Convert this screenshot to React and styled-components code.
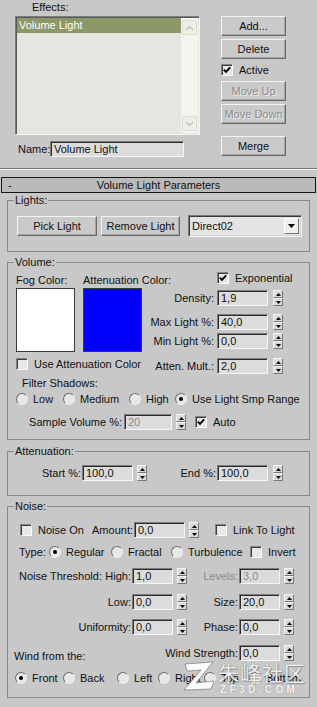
import React from 'react';
import styled, { createGlobalStyle, css } from 'styled-components';

const BG = '#c8c8c8';

const GlobalStyle = createGlobalStyle`
  html, body { margin: 0; padding: 0; background: ${BG}; }
  body { font-family: "Liberation Sans", Arial, sans-serif; font-size: 11px; color: #111; }
  * { box-sizing: border-box; }
`;

const sunken = css`
  border: 1px solid;
  border-color: #7c7c7c #f6f6f6 #f6f6f6 #7c7c7c;
  box-shadow: inset 1px 1px 0 #2c2c2c;
`;

const raised = css`
  border: 1px solid;
  border-color: #f4f4f4 #6a6a6a #6a6a6a #f4f4f4;
  box-shadow: inset -1px -1px 0 #a4a4a4;
`;

const Page = styled.div`
  position: relative;
  width: 317px;
  height: 707px;
  overflow: hidden;
  background: ${BG};
  font-family: "Liberation Sans", Arial, sans-serif;
  font-size: 11px;
  line-height: 14px;
  color: #111;
  white-space: nowrap;
`;

/* ---------- top area ---------- */
const Top = styled.div`
  display: flex;
  padding-left: 15px;
`;
const LeftCol = styled.div`
  width: 185px;
  display: flex;
  flex-direction: column;
`;
const EffectsLabel = styled.div`
  height: 16px;
  line-height: 14px;
  padding-left: 17px;
`;
const ListBox = styled.div`
  height: 119px;
  display: flex;
  padding: 1px;
  border: 1px solid;
  border-color: #7c7c7c #f6f6f6 #f6f6f6 #7c7c7c;
  box-shadow: inset 1px 1px 0 #5a5a5a;
  background: #e5e5e1;
`;
const ListItems = styled.div`
  flex: 1;
`;
const ListItem = styled.div`
  height: 15px;
  line-height: 15px;
  padding-left: 2px;
  background: ${p => (p.$selected ? '#8c9868' : 'transparent')};
  color: ${p => (p.$selected ? '#fff' : '#111')};
`;
const ScrollBar = styled.div`
  width: 17px;
  background: #f4f3ed;
  display: flex;
  flex-direction: column;
  justify-content: space-between;
  padding: 2px 1px;
`;
const ScrollArrow = styled.div`
  height: 15px;
  border: 1px solid #dddcd4;
  border-radius: 2px;
  background: #efeee7;
  display: flex;
  align-items: center;
  justify-content: center;
`;
const NameRow = styled.div`
  margin-top: 6px;
  height: 16px;
  display: flex;
  align-items: center;
`;
const NameLabel = styled.span`
  width: 35px;
  padding-left: 3px;
`;
const TextField = styled.div`
  ${sunken};
  width: ${p => p.$w}px;
  height: 16px;
  line-height: 14px;
  padding-left: 3px;
  background: #dcdcdc;
  color: ${p => (p.$disabled ? '#8a8a8a' : '#111')};
  flex: none;
  overflow: hidden;
`;
const RightCol = styled.div`
  margin-left: 21px;
  width: 65px;
  padding-top: 16px;
  display: flex;
  flex-direction: column;
`;
const Btn = styled.div`
  ${raised};
  width: ${p => (p.$w ? `${p.$w}px` : '100%')};
  height: 20px;
  margin-top: ${p => p.$mt || 0}px;
  flex: none;
  display: flex;
  align-items: center;
  justify-content: center;
  background: #cacaca;
  color: ${p => (p.$disabled ? '#8c8c8c' : '#111')};
  text-shadow: ${p => (p.$disabled ? '1px 1px 0 #ececec' : 'none')};
`;
const ActiveRow = styled.div`
  height: 22px;
  display: flex;
  align-items: center;
  gap: 6px;
`;

/* ---------- separators ---------- */
const Groove = styled.div`
  margin-top: ${p => p.$mt || 0}px;
  height: 2px;
  border-top: 1px solid #7a7a7a;
  border-bottom: 1px solid #efefef;
`;
const TitleBar = styled.div`
  margin: 7px 1px 0 1px;
  height: 16px;
  border: 1px solid #161616;
  background: #bababa;
  display: grid;
  grid-template-columns: 1fr auto 1fr;
  align-items: center;
  line-height: 14px;
`;
const Collapse = styled.span`
  padding-left: 6px;
`;

/* ---------- groups ---------- */
const Group = styled.fieldset`
  margin: ${p => p.$mt || 0}px 7px 0 7px;
  padding: ${p => p.$pt || 0}px 0 ${p => p.$pb || 0}px 0;
  border: 1px solid #8a8a8a;
  min-width: 0;
`;
const Legend = styled.legend`
  margin-left: 6px;
  padding: 0 1px;
  line-height: 14px;
  font-size: 11px;
`;
const Row = styled.div`
  display: flex;
  align-items: center;
  height: ${p => p.$h || 16}px;
  margin-top: ${p => p.$mt || 0}px;
  padding-left: ${p => p.$pl || 0}px;
`;
const Segment = styled.div`
  width: ${p => p.$w}px;
  flex: none;
  display: flex;
  align-items: ${p => (p.$pt ? 'flex-start' : 'center')};
  align-self: stretch;
  justify-content: space-between;
  padding-top: ${p => p.$pt || 0}px;
  padding-left: ${p => p.$pl || 0}px;
  padding-right: 1px;
`;
const FieldLabel = styled.span`
  width: ${p => p.$w}px;
  flex: none;
  display: flex;
  justify-content: flex-end;
  padding-right: ${p => p.$pr ?? 1}px;
  color: ${p => (p.$disabled ? '#8c8c8c' : '#111')};
`;
const PlainLabel = styled.span`
  width: ${p => (p.$w ? `${p.$w}px` : 'auto')};
  flex: none;
`;

/* ---------- controls ---------- */
const CheckBox = styled.span`
  width: 12px;
  height: 12px;
  flex: none;
  display: inline-flex;
  align-items: center;
  justify-content: center;
  border: 1px solid;
  border-color: #858585 #fbfbfb #fbfbfb #858585;
  box-shadow: inset 1px 1px 0 #3c3c3c;
  background: #e8e8e8;
`;
const RadioCircle = styled.span`
  width: 12px;
  height: 12px;
  flex: none;
  border-radius: 50%;
  display: inline-flex;
  align-items: center;
  justify-content: center;
  border: 1px solid;
  border-color: #6e6e6e #ececec #ececec #6e6e6e;
  background: #e8e8e8;
`;
const RadioDot = styled.span`
  width: 4px;
  height: 4px;
  border-radius: 50%;
  background: #000;
`;
const Option = styled.span`
  display: inline-flex;
  align-items: center;
  gap: ${p => p.$gap ?? 5}px;
  width: ${p => (p.$w ? `${p.$w}px` : 'auto')};
  margin-left: ${p => p.$ml || 0}px;
  flex: none;
`;
const SpinBox = styled.span`
  margin-left: ${p => p.$ml ?? 4}px;
  width: 10px;
  height: 16px;
  flex: none;
  display: flex;
  flex-direction: column;
`;
const SpinHalf = styled.span`
  flex: 1;
  display: flex;
  align-items: center;
  justify-content: center;
  background: #dadada;
  border: 1px solid;
  border-color: #f6f6f6 #777 #777 #f6f6f6;
`;
const Combo = styled.div`
  width: 114px;
  height: 22px;
  margin-left: 4px;
  display: flex;
  align-items: center;
  border: 1px solid;
  border-color: #7c7c7c #f6f6f6 #f6f6f6 #7c7c7c;
  box-shadow: inset 1px 1px 0 #3a3a3a, inset -1px -1px 0 #d2d2d2;
  background: #e4e4e4;
  padding: 2px 2px 2px 3px;
`;
const ComboText = styled.span`
  flex: 1;
`;
const ComboBtn = styled.span`
  width: 15px;
  height: 16px;
  display: flex;
  align-items: center;
  justify-content: center;
  background: #f0efe9;
  border: 1px solid;
  border-color: #fff #777 #777 #fff;
`;
const ButtonRow = styled.div`
  display: flex;
  align-items: center;
  height: 22px;
  padding-left: 9px;
  gap: 4px;
`;

/* ---------- volume ---------- */
const VolTop = styled.div`
  display: flex;
  padding-left: 8px;
`;
const SwatchBlock = styled.div`
  width: 134px;
  flex: none;
  display: flex;
  flex-direction: column;
`;
const SwatchLabels = styled.div`
  margin-top: 4px;
  height: 14px;
  display: flex;
`;
const Swatches = styled.div`
  margin-top: 1px;
  display: flex;
  gap: 8px;
`;
const Swatch = styled.div`
  width: 59px;
  height: 64px;
  background: ${p => p.$color};
  border: 1px solid #3a3a3a;
`;
const ParamBlock = styled.div`
  display: flex;
  flex-direction: column;
`;

/* ---------- watermark ---------- */
const Watermark = styled.div`
  position: absolute;
  left: 182px;
  top: 659px;
  display: flex;
  align-items: flex-start;
  gap: 2px;
  pointer-events: none;
`;
const WmText = styled.div`
  display: flex;
  flex-direction: column;
  align-items: flex-start;
`;
const WmCn = styled.span`
  font-family: "Noto Sans CJK SC", "Noto Sans", sans-serif;
  font-size: 21px;
  line-height: 26px;
  letter-spacing: 1px;
  color: rgba(255, 255, 255, 0.93);
  text-shadow: 0 0 1px rgba(0, 0, 0, 0.45), 1px 1px 1px rgba(0, 0, 0, 0.25);
`;
const WmEn = styled.span`
  font-family: "Liberation Sans", Arial, sans-serif;
  font-weight: bold;
  font-size: 10px;
  line-height: 10px;
  letter-spacing: 3.4px;
  padding-left: 2px;
  color: rgba(255, 255, 255, 0.95);
  text-shadow: 0 0 1px rgba(0, 0, 0, 0.4);
`;

/* ---------- small components ---------- */
function Check({ checked }) {
  return (
    <CheckBox>
      {checked && (
        <svg width="8" height="8" viewBox="0 0 8 8">
          <path d="M0.8 3.6 L3 5.9 L7.2 1.4" stroke="#000" strokeWidth="1.9" fill="none" />
        </svg>
      )}
    </CheckBox>
  );
}

function Radio({ checked }) {
  return <RadioCircle>{checked && <RadioDot />}</RadioCircle>;
}

function Tri({ up }) {
  return (
    <svg width="5" height="3" viewBox="0 0 5 3">
      <path d={up ? 'M0 3 L2.5 0 L5 3 Z' : 'M0 0 L5 0 L2.5 3 Z'} fill="#000" />
    </svg>
  );
}

function Spinner({ ml }) {
  return (
    <SpinBox $ml={ml}>
      <SpinHalf><Tri up /></SpinHalf>
      <SpinHalf><Tri /></SpinHalf>
    </SpinBox>
  );
}

function Num({ value, w = 51, disabled, sm }) {
  return (
    <>
      <TextField $w={w} $disabled={disabled}>{value}</TextField>
      <Spinner ml={sm} />
    </>
  );
}

function Chevron({ up }) {
  return (
    <svg width="9" height="6" viewBox="0 0 9 6">
      <path d={up ? 'M1 5 L4.5 1.5 L8 5' : 'M1 1 L4.5 4.5 L8 1'} stroke="#c4c4bc" strokeWidth="1.6" fill="none" />
    </svg>
  );
}

function ZLogo() {
  return (
    <svg width="34" height="32" viewBox="0 0 34 32">
      <path
        d="M3 5 L31 3 L14 24 L32 22 L29 30 L2 31 L19 11 L5 12 Z"
        fill="rgba(255,255,255,0.95)"
        stroke="rgba(90,90,90,0.55)"
        strokeWidth="1"
      />
    </svg>
  );
}

export default function App() {
  return (
    <>
      <GlobalStyle />
      <Page>
        <Top>
          <LeftCol>
            <EffectsLabel>Effects:</EffectsLabel>
            <ListBox>
              <ListItems>
                <ListItem $selected>Volume Light</ListItem>
              </ListItems>
              <ScrollBar>
                <ScrollArrow><Chevron up /></ScrollArrow>
                <ScrollArrow><Chevron /></ScrollArrow>
              </ScrollBar>
            </ListBox>
            <NameRow>
              <NameLabel>Name:</NameLabel>
              <TextField $w={134}>Volume Light</TextField>
            </NameRow>
          </LeftCol>
          <RightCol>
            <Btn>Add...</Btn>
            <Btn $mt={3}>Delete</Btn>
            <ActiveRow><Check checked />Active</ActiveRow>
            <Btn $disabled>Move Up</Btn>
            <Btn $disabled $mt={3}>Move Down</Btn>
            <Btn $mt={12}>Merge</Btn>
          </RightCol>
        </Top>

        <Groove $mt={11} />
        <TitleBar>
          <Collapse>-</Collapse>
          <span>Volume Light Parameters</span>
          <span />
        </TitleBar>

        <Group $pt={8} $pb={14}>
          <Legend>Lights:</Legend>
          <ButtonRow>
            <Btn $w={80}>Pick Light</Btn>
            <Btn $w={79}>Remove Light</Btn>
            <Combo>
              <ComboText>Direct02</ComboText>
              <ComboBtn>
                <svg width="7" height="4" viewBox="0 0 7 4"><path d="M0 0 L7 0 L3.5 4 Z" fill="#000" /></svg>
              </ComboBtn>
            </Combo>
          </ButtonRow>
        </Group>

        <Group $mt={3} $pb={9}>
          <Legend>Volume:</Legend>
          <VolTop>
            <SwatchBlock>
              <SwatchLabels>
                <PlainLabel $w={67}>Fog Color:</PlainLabel>
                <PlainLabel>Attenuation Color:</PlainLabel>
              </SwatchLabels>
              <Swatches>
                <Swatch $color="#ffffff" />
                <Swatch $color="#0000ff" />
              </Swatches>
              <Row $mt={4} $h={16}>
                <Option $gap={6}><Check />Use Attenuation Color</Option>
              </Row>
            </SwatchBlock>
            <ParamBlock>
              <Row $h={18} $pl={67}>
                <Option $gap={6}><Check checked />Exponential</Option>
              </Row>
              <Row $mt={3}>
                <FieldLabel $w={67} $pr={3}>Density:</FieldLabel>
                <Num value="1,9" sm={5} />
              </Row>
              <Row $mt={8}>
                <FieldLabel $w={67} $pr={3}>Max Light %:</FieldLabel>
                <Num value="40,0" sm={5} />
              </Row>
              <Row $mt={3}>
                <FieldLabel $w={67} $pr={3}>Min Light %:</FieldLabel>
                <Num value="0,0" sm={5} />
              </Row>
              <Row $mt={9}>
                <FieldLabel $w={67} $pr={3}>Atten. Mult.:</FieldLabel>
                <Num value="2,0" sm={5} />
              </Row>
            </ParamBlock>
          </VolTop>
          <Row $mt={2} $h={14} $pl={14}>Filter Shadows:</Row>
          <Row $mt={2} $h={14} $pl={8}>
            <Option $w={47}><Radio />Low</Option>
            <Option $w={66}><Radio />Medium</Option>
            <Option $w={46}><Radio />High</Option>
            <Option><Radio checked />Use Light Smp Range</Option>
          </Row>
          <Row $mt={8}>
            <FieldLabel $w={116} $pr={2}>Sample Volume %:</FieldLabel>
            <Num value="20" w={48} disabled />
            <Option $ml={9} $gap={6}><Check checked />Auto</Option>
          </Row>
        </Group>

        <Group $mt={4} $pt={7} $pb={14}>
          <Legend>Attenuation:</Legend>
          <Row>
            <FieldLabel $w={74}>Start %:</FieldLabel>
            <Num value="100,0" />
            <FieldLabel $w={70}>End %:</FieldLabel>
            <Num value="100,0" sm={5} />
          </Row>
        </Group>

        <Group $mt={3} $pt={9} $pb={11}>
          <Legend>Noise:</Legend>
          <Row $pl={12}>
            <Option $w={76} $gap={6}><Check />Noise On</Option>
            <FieldLabel $w={38}>Amount:</FieldLabel>
            <Num value="0,0" />
            <Option $ml={16} $gap={6}><Check />Link To Light</Option>
          </Row>
          <Row $mt={6} $pl={11}>
            <PlainLabel $w={30}>Type:</PlainLabel>
            <Option $w={62}><Radio checked />Regular</Option>
            <Option $w={60}><Radio />Fractal</Option>
            <Option $w={79}><Radio />Turbulence</Option>
            <Option $gap={6}><Check />Invert</Option>
          </Row>
          <Row $mt={8}>
            <Segment $w={124} $pl={11}><span>Noise Threshold:</span><span>High:</span></Segment>
            <Num value="1,0" w={41} />
            <FieldLabel $w={52} $disabled>Levels:</FieldLabel>
            <Num value="3,0" w={41} disabled />
          </Row>
          <Row $mt={10}>
            <FieldLabel $w={124}>Low:</FieldLabel>
            <Num value="0,0" w={41} />
            <FieldLabel $w={52}>Size:</FieldLabel>
            <Num value="20,0" w={41} />
          </Row>
          <Row $mt={9}>
            <FieldLabel $w={124}>Uniformity:</FieldLabel>
            <Num value="0,0" w={41} />
            <FieldLabel $w={52}>Phase:</FieldLabel>
            <Num value="0,0" w={41} />
          </Row>
          <Row $mt={10}>
            <Segment $w={179} $pl={6} $pt={4}><span>Wind from the:</span></Segment>
            <FieldLabel $w={52}>Wind Strength:</FieldLabel>
            <Num value="0,0" w={41} />
          </Row>
          <Row $mt={9} $pl={7}>
            <Option $w={48}><Radio checked />Front</Option>
            <Option $w={54}><Radio />Back</Option>
            <Option $w={41}><Radio />Left</Option>
            <Option $w={46}><Radio />Right</Option>
            <Option $w={45}><Radio />Top</Option>
            <Option><Radio />Bottom</Option>
          </Row>
        </Group>
        <Groove $mt={9} />

        <Watermark>
          <ZLogo />
          <WmText>
            <WmCn>朱峰社区</WmCn>
            <WmEn>ZF3D.COM</WmEn>
          </WmText>
        </Watermark>
      </Page>
    </>
  );
}
